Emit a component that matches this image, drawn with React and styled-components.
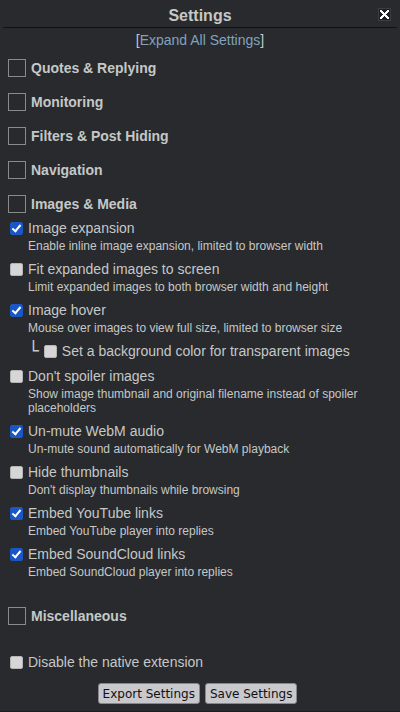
import React from "react";
import styled, { createGlobalStyle } from "styled-components";

const GlobalStyle = createGlobalStyle`
  html, body {
    margin: 0;
    padding: 0;
    background: #1d1f21;
  }
  body {
    font-family: "Liberation Sans", Arial, sans-serif;
    color: #c5c8c6;
  }
`;

const Panel = styled.div`
  box-sizing: border-box;
  width: 400px;
  height: 712px;
  background: #282a2e;
  border-bottom: 1px solid #1d1f21;
  display: flex;
  flex-direction: column;
  overflow: hidden;
`;

const Header = styled.div`
  position: relative;
  margin: 0 3px;
  height: 27px;
  border-bottom: 1px solid #111;
  text-align: center;
  font-size: 16px;
  font-weight: bold;
  line-height: 31px;
`;

const CloseButton = styled.button`
  position: absolute;
  top: 8px;
  right: 6px;
  width: 13px;
  height: 13px;
  padding: 0;
  border: none;
  background: none;
  cursor: pointer;
  svg {
    display: block;
  }
`;

const ExpandRow = styled.div`
  text-align: center;
  font-size: 14px;
  line-height: 17px;
  margin: 4px 0 2px;
  a {
    color: #81a2be;
    text-decoration: none;
  }
`;

const Body = styled.div`
  padding: 0 8px;
  display: flex;
  flex-direction: column;
`;

const SectionHeader = styled.label`
  display: flex;
  align-items: center;
  gap: 5px;
  padding: 8px 0;
  font-size: 14px;
  font-weight: bold;
  line-height: 18px;
`;

const SectionBox = styled.input.attrs({ type: "checkbox" })`
  appearance: none;
  box-sizing: border-box;
  margin: 0;
  width: 18px;
  height: 18px;
  border: 1px solid #8a8a8a;
  background: transparent;
`;

const OptionList = styled.div`
  margin: -2px 0 13px;
`;

const Option = styled.div`
  margin-bottom: ${(p) => (p.$tight ? 7 : 7)}px;
`;

const OptionLabel = styled.label`
  display: flex;
  align-items: center;
  gap: 5px;
  padding-left: ${(p) => p.$indent || 2}px;
  font-size: 14px;
  line-height: 18px;
`;

const Check = styled.input.attrs({ type: "checkbox" })`
  appearance: none;
  box-sizing: border-box;
  margin: 0;
  width: 13px;
  height: 13px;
  border-radius: 2px;
  border: 1px solid #b4b4b4;
  background: #d6d6d6;
  position: relative;
  flex: none;
  &:checked {
    background: #1a56c4;
    border-color: #1a56c4;
  }
  &:checked::after {
    content: "";
    position: absolute;
    left: 3px;
    top: 0px;
    width: 3px;
    height: 7px;
    border: solid #fff;
    border-width: 0 2px 2px 0;
    transform: rotate(40deg);
  }
`;

const Tree = styled.span`
  font-family: "DejaVu Sans", sans-serif;
  font-size: 18px;
  line-height: 18px;
  margin-right: 0;
`;

const Desc = styled.div`
  margin-top: 2px;
  padding-left: 20px;
  font-size: 12px;
  line-height: 14px;
`;

const Spacer = styled.div`
  height: 20px;
`;

const Footer = styled.div`
  display: flex;
  justify-content: center;
  gap: 5px;
  margin-top: 12px;
  padding-right: 5px;
`;

const Button = styled.button`
  box-sizing: border-box;
  height: 21px;
  padding: 0 4px;
  font-family: "DejaVu Sans", sans-serif;
  font-size: 12px;
  color: #111;
  background: #c8c8cd;
  border: 1px solid #88888c;
  border-radius: 3px;
`;

const sections = [
  "Quotes & Replying",
  "Monitoring",
  "Filters & Post Hiding",
  "Navigation",
];

const options = [
  {
    name: "Image expansion",
    desc: "Enable inline image expansion, limited to browser width",
    on: true,
  },
  {
    name: "Fit expanded images to screen",
    desc: "Limit expanded images to both browser width and height",
  },
  {
    name: "Image hover",
    desc: "Mouse over images to view full size, limited to browser size",
    on: true,
    sub: "Set a background color for transparent images",
  },
  {
    name: "Don't spoiler images",
    desc: "Show image thumbnail and original filename instead of spoiler placeholders",
  },
  {
    name: "Un-mute WebM audio",
    desc: "Un-mute sound automatically for WebM playback",
    on: true,
  },
  {
    name: "Hide thumbnails",
    desc: "Don't display thumbnails while browsing",
  },
  {
    name: "Embed YouTube links",
    desc: "Embed YouTube player into replies",
    on: true,
  },
  {
    name: "Embed SoundCloud links",
    desc: "Embed SoundCloud player into replies",
    on: true,
  },
];

function CloseIcon() {
  return (
    <svg width="13" height="13" viewBox="0 0 13 13" shapeRendering="crispEdges">
      <rect x="0.5" y="0.5" width="12" height="12" fill="#1f2023" stroke="#3c3d40" />
      <path
        d="M2 2h2v1h1v1h1v1h1V4h1V3h1V2h2v2h-1v1h-1v1h-1v1h1v1h1v1h1v2H9v-1H8V9H7V8H6v1H5v1H4v1H2V9h1V8h1V7h1V6H4V5H3V4H2z"
        fill="#fff"
      />
    </svg>
  );
}

export default function App() {
  return (
    <Panel>
      <GlobalStyle />
      <Header>
        Settings
        <CloseButton aria-label="Close">
          <CloseIcon />
        </CloseButton>
      </Header>
      <ExpandRow>
        [<a href="#">Expand All Settings</a>]
      </ExpandRow>
      <Body>
        {sections.map((s) => (
          <SectionHeader key={s}>
            <SectionBox />
            {s}
          </SectionHeader>
        ))}
        <SectionHeader>
          <SectionBox />
          Images &amp; Media
        </SectionHeader>
        <OptionList>
          {options.map((o) => (
            <React.Fragment key={o.name}>
              <Option>
                <OptionLabel>
                  <Check defaultChecked={!!o.on} />
                  {o.name}
                </OptionLabel>
                <Desc>{o.desc}</Desc>
              </Option>
              {o.sub && (
                <Option $tight>
                  <OptionLabel $indent={20}>
                    <Tree>└</Tree>
                    <Check />
                    {o.sub}
                  </OptionLabel>
                </Option>
              )}
            </React.Fragment>
          ))}
        </OptionList>
        <SectionHeader>
          <SectionBox />
          Miscellaneous
        </SectionHeader>
        <Spacer />
        <OptionLabel>
          <Check />
          Disable the native extension
        </OptionLabel>
        <Footer>
          <Button>Export Settings</Button>
          <Button>Save Settings</Button>
        </Footer>
      </Body>
    </Panel>
  );
}
